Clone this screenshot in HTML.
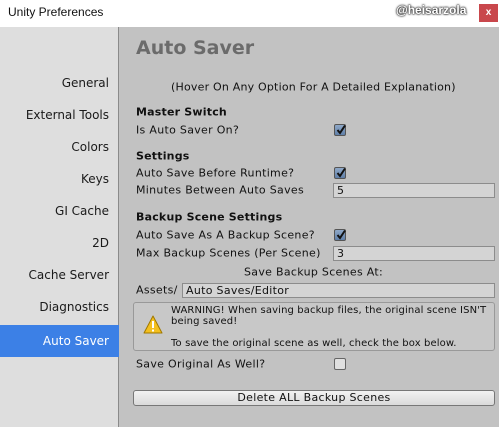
<!DOCTYPE html>
<html><head><style>
*{margin:0;padding:0;box-sizing:border-box}
body{width:499px;height:427px;overflow:hidden;background:#c2c2c2;font-family:"DejaVu Sans","Liberation Sans",sans-serif;position:relative}
.a{position:absolute;white-space:nowrap}
#title{left:0;top:0;width:499px;height:27px;background:#fff}
#side{left:0;top:27px;width:119px;height:400px;background:#dedede;border-right:1px solid #8a8a8a}
.si{right:390px;font-size:12px;color:#1a1a1a;transform:translateY(-50%)}
.t{font-size:11px;letter-spacing:0.3px;color:#111;transform:translateY(-50%)}
.b{font-weight:bold;font-size:11px;letter-spacing:0.2px;color:#111;transform:translateY(-50%)}
.cb{width:12px;height:12px;border:1px solid #555;border-radius:2px;background:linear-gradient(#8fa8c8,#5f7fa8)}
.cb svg{position:absolute;left:0;top:-1px}
.fld{background:#d4d4d4;border:1px solid #8c8c8c;font-size:11px;letter-spacing:0.3px;color:#111;padding-left:3px;line-height:13px}
</style></head><body>
<div class="a" id="title"></div>
<div class="a" style="left:8px;top:5px;font-family:'Liberation Sans',sans-serif;font-size:12px;color:#111">Unity Preferences</div>
<div class="a" style="left:396px;top:3px;font-family:'Liberation Sans',sans-serif;font-weight:bold;font-size:12px;color:#fff;text-shadow:0 0 2px #333,0 0 2px #333,0 0 1px #000">@heisarzola</div>
<div class="a" style="left:479px;top:4px;width:19px;height:18px;background:#c9474c;color:#fff;font-size:10px;font-weight:bold;text-align:center;line-height:17px;font-family:'Liberation Sans',sans-serif">x</div>
<div class="a" id="side"></div>
<div class="a" style="left:0;top:325px;width:119px;height:32px;background:#3c80e6"></div>
<div class="a si" style="top:83px">General</div>
<div class="a si" style="top:115px">External Tools</div>
<div class="a si" style="top:147px">Colors</div>
<div class="a si" style="top:179px">Keys</div>
<div class="a si" style="top:211px">GI Cache</div>
<div class="a si" style="top:243px">2D</div>
<div class="a si" style="top:275px">Cache Server</div>
<div class="a si" style="top:307px">Diagnostics</div>
<div class="a si" style="top:341px;color:#fff">Auto Saver</div>

<div class="a" style="left:136px;top:37px;font-size:19px;font-weight:bold;color:#6b6b6b">Auto Saver</div>
<div class="a t" style="left:171px;top:87px;letter-spacing:0.2px">(Hover On Any Option For A Detailed Explanation)</div>
<div class="a b" style="left:136px;top:112px">Master Switch</div>
<div class="a t" style="left:136px;top:130px">Is Auto Saver On?</div>
<div class="a cb" style="left:334px;top:124px"><svg width="12" height="12"><path d="M2.5 6 L5 9 L10 1.5" stroke="#111" stroke-width="2" fill="none"/></svg></div>
<div class="a b" style="left:136px;top:156px">Settings</div>
<div class="a t" style="left:136px;top:173px">Auto Save Before Runtime?</div>
<div class="a cb" style="left:334px;top:167px"><svg width="12" height="12"><path d="M2.5 6 L5 9 L10 1.5" stroke="#111" stroke-width="2" fill="none"/></svg></div>
<div class="a t" style="left:136px;top:190px">Minutes Between Auto Saves</div>
<div class="a fld" style="left:333px;top:183px;width:162px;height:15px">5</div>
<div class="a b" style="left:136px;top:217px">Backup Scene Settings</div>
<div class="a t" style="left:136px;top:235px">Auto Save As A Backup Scene?</div>
<div class="a cb" style="left:334px;top:229px"><svg width="12" height="12"><path d="M2.5 6 L5 9 L10 1.5" stroke="#111" stroke-width="2" fill="none"/></svg></div>
<div class="a t" style="left:136px;top:253px">Max Backup Scenes (Per Scene)</div>
<div class="a fld" style="left:333px;top:246px;width:162px;height:15px">3</div>
<div class="a t" style="left:244px;top:272px">Save Backup Scenes At:</div>
<div class="a t" style="left:136px;top:290px">Assets/</div>
<div class="a fld" style="left:182px;top:283px;width:313px;height:15px">Auto Saves/Editor</div>
<div class="a" style="left:133px;top:302px;width:362px;height:49px;border:1px solid #999;border-radius:3px;background:#c8c8c8"></div>
<svg class="a" style="left:143px;top:315px" width="20" height="20"><path d="M10 1 L19 18 L1 18 Z" fill="#f4c01e" stroke="#a07800" stroke-width="1" stroke-linejoin="round"/><rect x="9" y="6" width="2" height="7" fill="#fff"/><rect x="9" y="14.5" width="2" height="2" fill="#fff"/></svg>
<div class="a" style="left:171px;top:305px;font-size:10px;letter-spacing:0.12px;line-height:11px;color:#111">WARNING! When saving backup files, the original scene ISN'T<br>being saved!<br><br>To save the original scene as well, check the box below.</div>
<div class="a t" style="left:136px;top:364px">Save Original As Well?</div>
<div class="a" style="left:334px;top:358px;width:12px;height:12px;border:1px solid #666;border-radius:2px;background:#e0e0e0"></div>
<div class="a" style="left:133px;top:390px;width:362px;height:16px;border:1px solid #777;border-radius:3px;background:linear-gradient(#f2f2f2,#dadada);font-size:11px;letter-spacing:0.3px;color:#111;text-align:center;line-height:14px">Delete ALL Backup Scenes</div>
</body></html>
